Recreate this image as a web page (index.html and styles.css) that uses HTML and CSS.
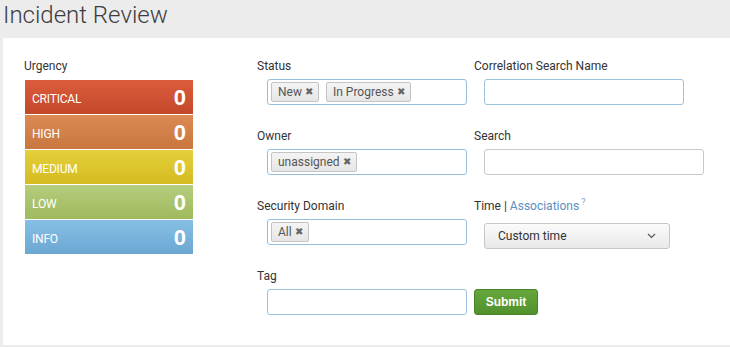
FILE: index.html
```html
<!DOCTYPE html>
<html>
<head>
<meta charset="utf-8">
<link rel="stylesheet" href="styles.css">
</head>
<body>
<header class="page-header">
  <h1 class="title">Incident Review</h1>
</header>
<main class="panel">
  <section class="urgency">
    <div class="field-label">Urgency</div>
    <div class="urgency-list">
      <div class="urg urg-critical"><span class="urg-name">CRITICAL</span><span class="urg-count">0</span></div>
      <div class="urg urg-high"><span class="urg-name">HIGH</span><span class="urg-count">0</span></div>
      <div class="urg urg-medium"><span class="urg-name">MEDIUM</span><span class="urg-count">0</span></div>
      <div class="urg urg-low"><span class="urg-name">LOW</span><span class="urg-count">0</span></div>
      <div class="urg urg-info"><span class="urg-name">INFO</span><span class="urg-count">0</span></div>
    </div>
  </section>
  <section class="filters">
    <div class="field">
      <div class="field-label">Status</div>
      <div class="multi">
        <span class="chip">New <span class="x">&#x2716;</span></span>
        <span class="chip">In Progress <span class="x">&#x2716;</span></span>
      </div>
    </div>
    <div class="field">
      <div class="field-label">Correlation Search Name</div>
      <div class="text-input blue"></div>
    </div>
    <div class="field">
      <div class="field-label">Owner</div>
      <div class="multi">
        <span class="chip">unassigned <span class="x">&#x2716;</span></span>
      </div>
    </div>
    <div class="field">
      <div class="field-label">Search</div>
      <div class="text-input wide"></div>
    </div>
    <div class="field">
      <div class="field-label">Security Domain</div>
      <div class="multi">
        <span class="chip">All <span class="x">&#x2716;</span></span>
      </div>
    </div>
    <div class="field">
      <div class="field-label">Time | <span class="link">Associations</span><span class="help">?</span></div>
      <div class="dropdown">
        <span>Custom time</span>
        <svg class="chev" width="9" height="6" viewBox="0 0 9 6"><path d="M1 1 L4.5 4.5 L8 1" fill="none" stroke="#555" stroke-width="1.2"/></svg>
      </div>
    </div>
    <div class="field">
      <div class="field-label">Tag</div>
      <div class="text-input blue"></div>
    </div>
    <div class="field submit-field">
      <button class="submit">Submit</button>
    </div>
  </section>
</main>
</body>
</html>
```
FILE: styles.css
```css
html, body {
  margin: 0;
  padding: 0;
}
body {
  background: #ececec;
  font-family: Roboto, "Liberation Sans", sans-serif;
  font-size: 12px;
  color: #333;
  width: 730px;
  height: 347px;
  overflow: hidden;
}
.page-header {
  height: 38px;
  padding-left: 3px;
}
.title {
  margin: 0;
  font-weight: 300;
  font-size: 24px;
  line-height: 30px;
  padding-top: 0;
  color: #3c3c3c;
}
.panel {
  margin-left: 3px;
  background: #fff;
  height: 307px;
  display: flex;
  padding-top: 20px;
  box-sizing: border-box;
}
.urgency {
  margin-left: 21px;
  width: 169px;
}
.field-label {
  line-height: 16px;
  height: 16px;
  white-space: nowrap;
}
.urgency-list {
  margin-top: 6px;
  margin-left: 1px;
  display: flex;
  flex-direction: column;
  gap: 1px;
}
.urg {
  height: 34px;
  display: flex;
  align-items: center;
  justify-content: space-between;
  padding: 0 7px 0 7px;
  color: #fff;
}
.urg-name {
  font-size: 12px;
  letter-spacing: -0.2px;
  padding-top: 3px;
}
.urg-count {
  font-family: "Liberation Sans", Arial, sans-serif;
  font-weight: bold;
  font-size: 22px;
  padding-top: 1px;
}
.urg-critical { background: linear-gradient(#da5c3c, #c3482b); }
.urg-high { background: linear-gradient(#db8a54, #c9773f); }
.urg-medium { background: linear-gradient(#e4d03a, #d6bb22); }
.urg-low { background: linear-gradient(#b5cd7d, #9fba5e); }
.urg-info { background: linear-gradient(#86bfe5, #6ca7d3); }

.filters {
  margin-left: 64px;
  display: grid;
  grid-template-columns: 217px 240px;
  grid-auto-rows: 47px;
  row-gap: 23px;
  align-content: start;
}
.field .multi,
.field .text-input,
.field .dropdown {
  margin-top: 5px;
  margin-left: 10px;
}
.multi {
  width: 200px;
  height: 26px;
  box-sizing: border-box;
  border: 1px solid #97bfdb;
  border-radius: 3px;
  display: flex;
  align-items: center;
  gap: 7px;
  padding-left: 3px;
}
.chip {
  height: 20px;
  box-sizing: border-box;
  border: 1px solid #c4c4c4;
  border-radius: 2px;
  background: linear-gradient(#f4f4f4, #e6e6e6);
  color: #555;
  padding: 0 5px 0 6px;
  line-height: 18px;
  display: inline-flex;
  align-items: center;
  gap: 3px;
}
.x {
  font-size: 10px;
  color: #666;
}
.text-input {
  width: 200px;
  height: 26px;
  box-sizing: border-box;
  border: 1px solid #c9c9c9;
  border-radius: 3px;
}
.text-input.blue {
  border-color: #9dc2db;
}
.text-input.wide {
  width: 220px;
  height: 26px;
}
.link {
  color: #5b8fbf;
}
.help {
  color: #7fa3c3;
  font-size: 9px;
  margin-left: 2px;
  position: relative;
  top: -5px;
}
.field .dropdown {
  margin-top: 9px;
}
.dropdown {
  width: 186px;
  height: 26px;
  box-sizing: border-box;
  border: 1px solid #c6c6c6;
  border-radius: 3px;
  background: linear-gradient(#fbfbfb, #e9e9e9);
  display: flex;
  align-items: center;
  justify-content: space-between;
  padding: 0 13px 0 13px;
  color: #333;
}
.submit {
  margin-top: 21px;
  width: 64px;
  height: 26px;
  border: 1px solid #4a8126;
  border-radius: 3px;
  background: linear-gradient(#66a83c, #52902c);
  color: #fff;
  font-family: "Liberation Sans", Arial, sans-serif;
  font-weight: bold;
  font-size: 12px;
  padding: 0;
}
```
